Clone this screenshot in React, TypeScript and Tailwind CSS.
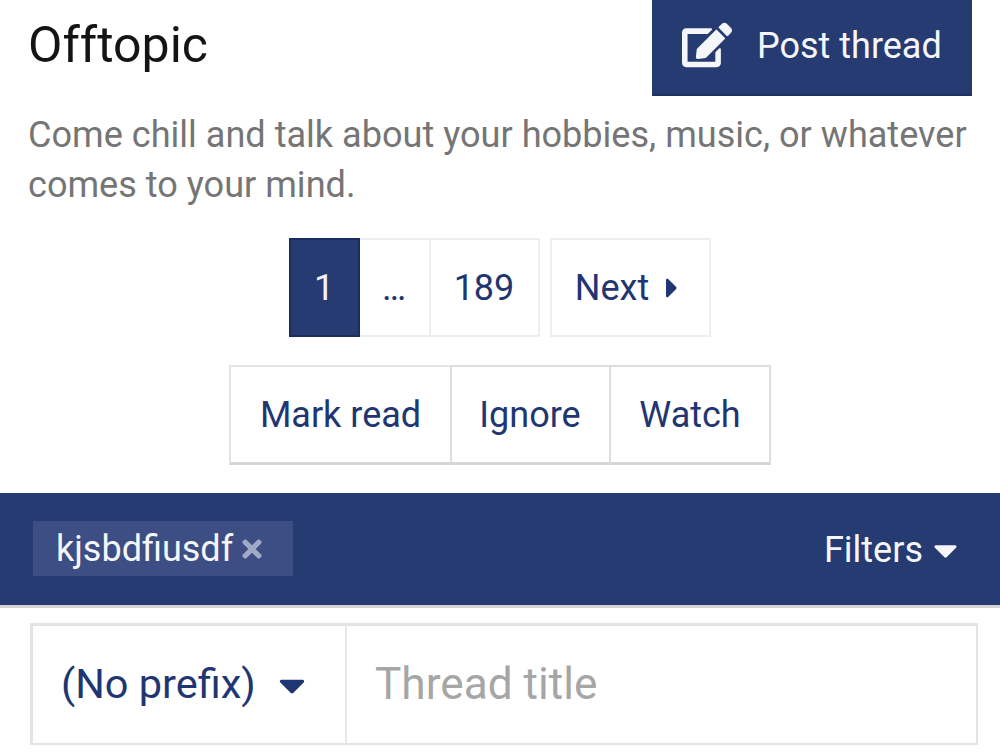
import { FaCaretDown, FaCaretRight, FaEdit, FaTimes } from "react-icons/fa";

export default function App() {
  return (
    <div className="h-[755px] w-[1000px] overflow-hidden bg-white font-['Roboto',sans-serif] text-[#1f3672]">
      <div className="flex items-start justify-between pl-[28px] pr-[28px]">
        <h1 className="pt-[15px] text-[50px] leading-[60px] font-normal text-[#141414]">Offtopic</h1>
        <button className="flex h-[96px] w-[320px] items-center border-b-2 border-[#1f3063] bg-[#273b73] pl-[30px] text-[36px] text-[#f4f6fa]">
          <FaEdit className="mr-[25px] mb-[4px] h-[50px] w-[50px]" />
          <span className="mb-[2px]">Post thread</span>
        </button>
      </div>

      <p className="pt-[14px] pl-[28px] text-[36.1px] leading-[50px] text-[#757575]">
        Come chill and talk about your hobbies, music, or whatever
        <br />
        comes to your mind.
      </p>

      <div className="mt-[28px] flex justify-center gap-[10px] pr-[1px] text-[36px]">
        <div className="flex h-[99px]">
          <div className="flex w-[71px] items-center justify-center border-2 border-[#1b2c5e] bg-[#273b73] text-[#f0f2f7]">1</div>
          <div className="flex w-[69px] items-center justify-center border-y-2 border-[#eeeeee]">…</div>
          <div className="flex w-[111px] items-center justify-center border-2 border-[#eeeeee]">189</div>
        </div>
        <div className="flex h-[99px] w-[161px] items-center justify-center border-2 border-[#eeeeee] pr-[7px]">
          Next
          <FaCaretRight className="ml-[17px] h-[32px] w-[12px]" />
        </div>
      </div>

      <div className="mt-[28px] flex justify-center text-[36px]">
        <div className="flex h-[100px] w-[223px] items-center justify-center border-2 border-[#e4e4e4] border-b-[3px] border-b-[#d6d6d6]">Mark read</div>
        <div className="-ml-[2px] flex h-[100px] w-[161px] items-center justify-center border-2 border-[#dddddd] border-b-[3px] border-b-[#d6d6d6] pr-[1px]">Ignore</div>
        <div className="-ml-[2px] flex h-[100px] w-[162px] items-center justify-center border-2 border-[#dddddd] border-b-[3px] border-b-[#d6d6d6]">Watch</div>
      </div>

      <div className="mt-[28px] flex h-[115px] items-center justify-between border-b-[3px] border-[#d4d4d4] bg-[#273b73] pr-[42px] pl-[33px] text-[36px] text-[#f4f6fa]">
        <div className="mb-[1px] flex h-[55px] w-[260px] items-center bg-[#3c4e83] pl-[23px]">
          kjsbdfiusdf
          <FaTimes className="ml-[8px] h-[28px] w-[22px] text-[#a0aac6]" />
        </div>
        <div className="flex items-center pt-[2px]">
          Filters
          <FaCaretDown className="ml-[10px] h-[38px] w-[25px]" />
        </div>
      </div>

      <div className="mx-[30px] mt-[15px] flex h-[122px] w-[948px] border-2 border-[#e4e4e4] border-t-[3px] border-l-[3px] text-[41.5px]">
        <div className="flex w-[314px] items-center border-r-2 border-[#e8e8e8] pl-[28px]">
          (No prefix)
          <FaCaretDown className="ml-[22px] h-[42px] w-[28px]" />
        </div>
        <div className="flex flex-1 items-center pb-[1px] pl-[28px] text-[44.2px] text-[#a6a6a6]">Thread title</div>
      </div>
    </div>
  );
}
